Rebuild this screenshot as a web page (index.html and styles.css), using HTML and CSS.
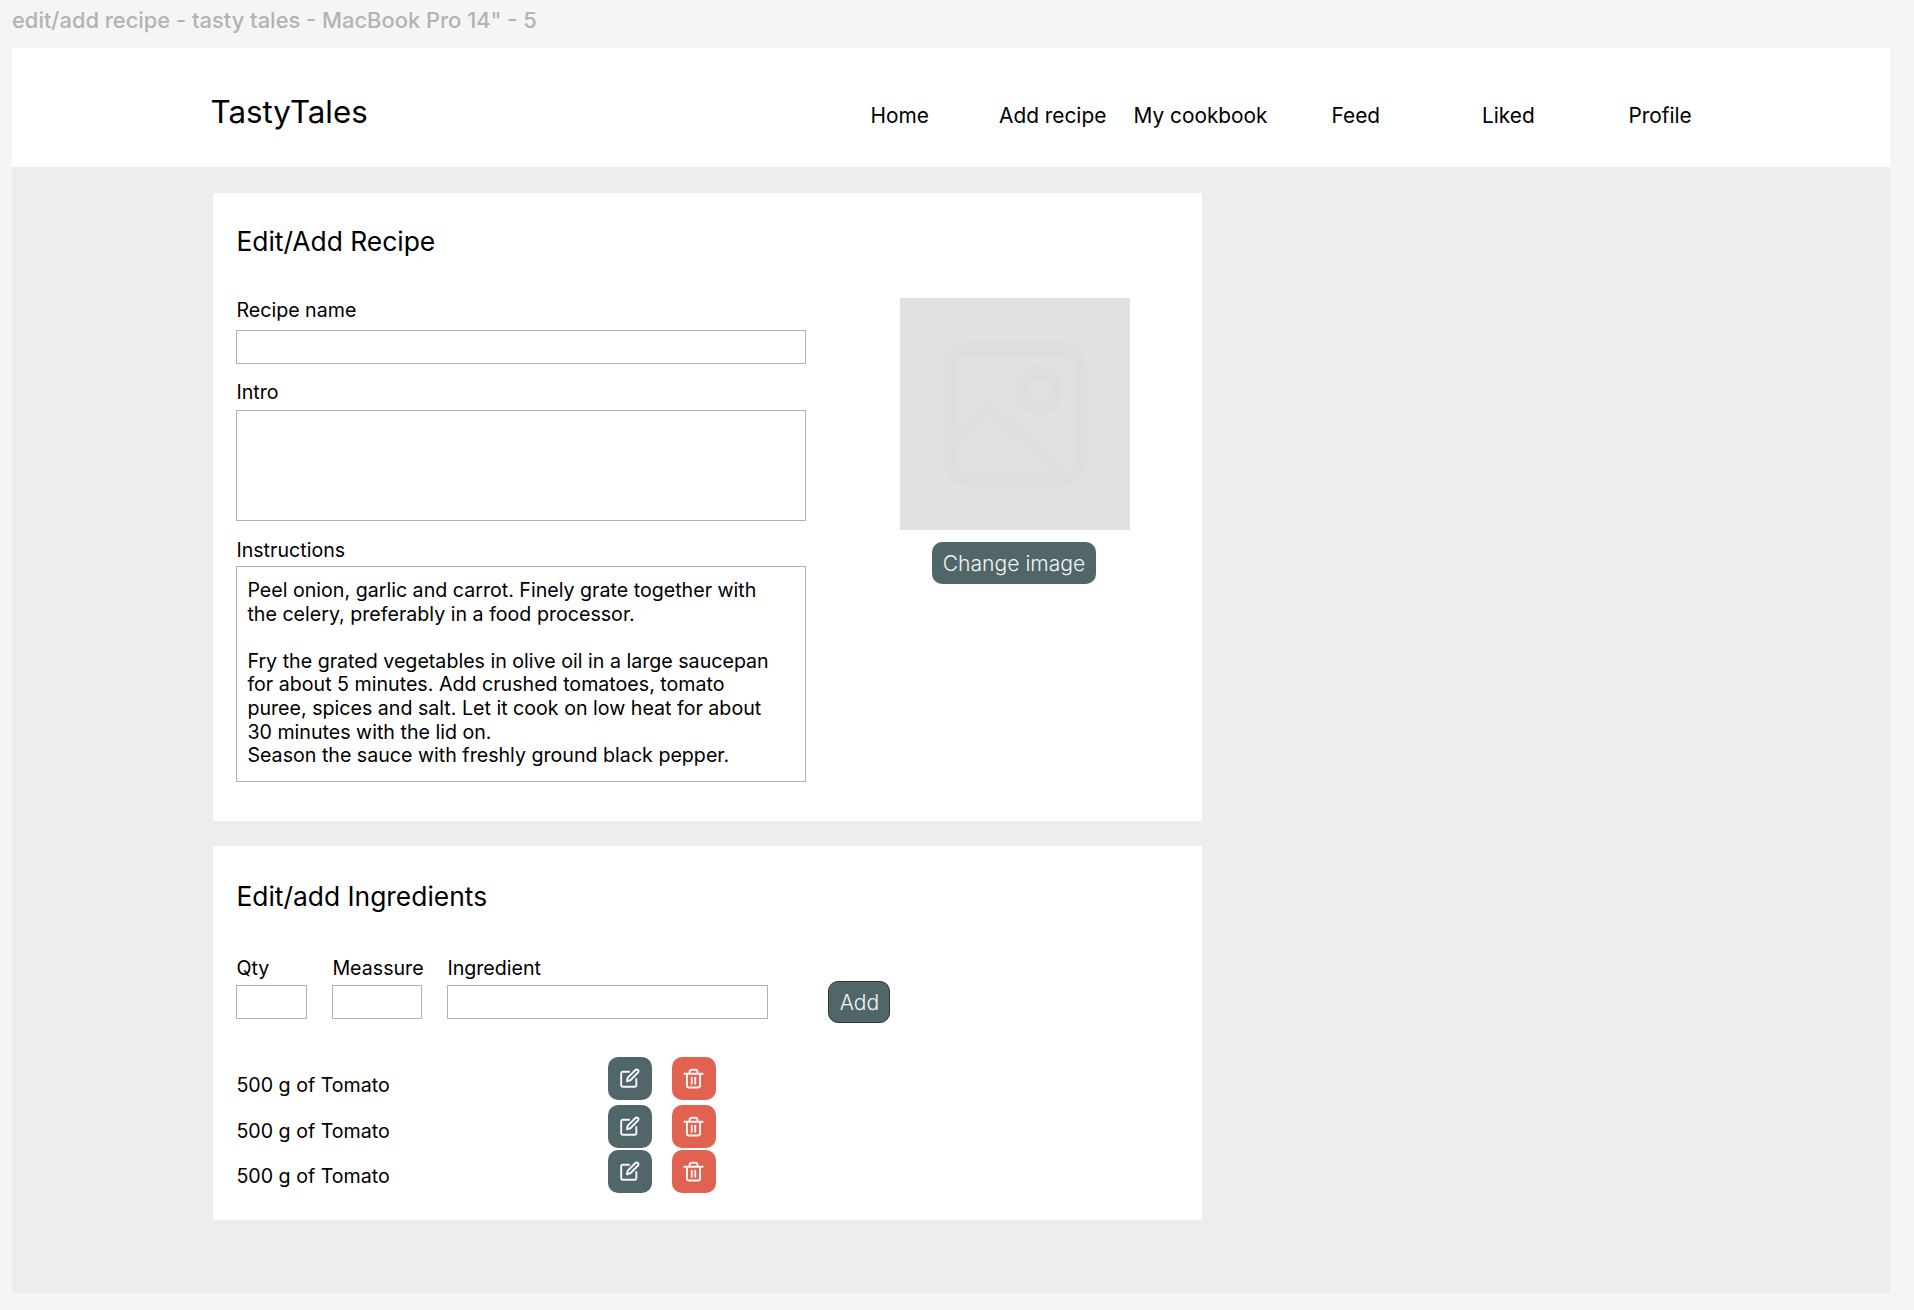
FILE: index.html
```html
<!DOCTYPE html>
<html lang="en">
<head>
<meta charset="utf-8">
<title>TastyTales</title>
<link rel="stylesheet" href="styles.css">
</head>
<body>
<svg class="sprite" width="0" height="0" aria-hidden="true">
  <symbol id="edit" viewBox="0 0 24 24"><path d="M11.500 4.200H4.200a1.700 1.700 0 0 0-1.700 1.700v13.900a1.700 1.700 0 0 0 1.700 1.700h13.900a1.700 1.700 0 0 0 1.700-1.700V12.500M18.800 2.300a2 2 0 0 1 2.900 2.900L13 14l-4 1.100L10 11z"/></symbol>
  <symbol id="trash" viewBox="0 0 24 24"><path d="M1.500 6.500h21M4.500 6.500v13.500a2.200 2.200 0 0 0 2.200 2.200h10.600a2.200 2.200 0 0 0 2.200-2.200V6.500M7.500 6.500V4.200a2.200 2.200 0 0 1 2.200-2.200h4.600a2.200 2.200 0 0 1 2.200 2.200v2.300M10 11v7M14 11v7"/></symbol>
</svg>
<p class="frame-title">edit/add recipe - tasty tales - MacBook Pro 14" - 5</p>
<div class="frame">
  <header class="header">
    <div class="logo">TastyTales</div>
    <nav class="nav">
      <a>Home</a><a>Add recipe</a><a>My cookbook</a><a>Feed</a><a>Liked</a><a>Profile</a>
    </nav>
  </header>
  <main class="main">
    <section class="card recipe">
      <h1 class="heading">Edit/Add Recipe</h1>
      <div class="recipe-body">
        <div class="fields">
          <label class="label" for="name">Recipe name</label>
          <input class="box name" id="name">
          <label class="label" for="intro">Intro</label>
          <textarea class="box intro" id="intro"></textarea>
          <label class="label" for="instructions">Instructions</label>
          <textarea class="box instructions" id="instructions">Peel onion, garlic and carrot. Finely grate together with
the celery, preferably in a food processor.

Fry the grated vegetables in olive oil in a large saucepan
for about 5 minutes. Add crushed tomatoes, tomato
puree, spices and salt. Let it cook on low heat for about
30 minutes with the lid on.
Season the sauce with freshly ground black pepper.</textarea>
        </div>
        <div class="image-column">
          <div class="placeholder">
            <svg class="placeholder-icon" viewBox="0 0 24 24"><rect x="3" y="3" width="18" height="18" rx="2.500"/><circle cx="15.250" cy="8.700" r="2.450"/><path d="M3 16.300l5.500-5.400L18.800 21"/></svg>
          </div>
          <button class="button change">Change image</button>
        </div>
      </div>
    </section>
    <section class="card ingredients">
      <h2 class="heading">Edit/add Ingredients</h2>
      <div class="ingredient-form">
        <div class="qty"><label class="label" for="qty">Qty</label><input class="box" id="qty"></div>
        <div class="measure"><label class="label" for="measure">Meassure</label><input class="box" id="measure"></div>
        <div class="ingredient"><label class="label" for="ingredient">Ingredient</label><input class="box" id="ingredient"></div>
        <button class="button add">Add</button>
      </div>
      <ul class="list">
        <li class="item"><span class="item-text">500 g of Tomato</span><button class="icon-button" aria-label="Edit"><svg class="icon"><use href="#edit"/></svg></button><button class="icon-button delete" aria-label="Delete"><svg class="icon"><use href="#trash"/></svg></button></li>
        <li class="item"><span class="item-text">500 g of Tomato</span><button class="icon-button" aria-label="Edit"><svg class="icon"><use href="#edit"/></svg></button><button class="icon-button delete" aria-label="Delete"><svg class="icon"><use href="#trash"/></svg></button></li>
        <li class="item"><span class="item-text">500 g of Tomato</span><button class="icon-button" aria-label="Edit"><svg class="icon"><use href="#edit"/></svg></button><button class="icon-button delete" aria-label="Delete"><svg class="icon"><use href="#trash"/></svg></button></li>
      </ul>
    </section>
  </main>
</div>
</body>
</html>
```
FILE: styles.css
```css
* { box-sizing: border-box; margin: 0; padding: 0; }
body {
  background: #f5f5f5;
  color: #000;
  font: 400 19.640px/24px Inter, sans-serif;
  height: 1310px;
  overflow: hidden;
}
.sprite { display: none; }
.frame-title {
  height: 48px;
  padding: 6px 0 0 12px;
  font-size: 21.900px;
  line-height: 28px;
  font-weight: 500;
  color: #b3b3b3;
}
.frame { width: 1878px; height: 1244.500px; margin-left: 12px; background: #eceeed; }
.header { display: flex; height: 119px; background: #fff; }
.logo { width: 858.500px; padding: 45px 0 0 198.500px; font-size: 31.300px; line-height: 38px; }
.nav {
  display: grid;
  grid-template-columns: 128.500px 134.500px 198px 150.500px 146.500px auto;
  padding-top: 54px;
  font-size: 20.850px;
  line-height: 28px;
}
.main { padding: 26px 0 0 201px; }
.card { width: 989px; background: #fff; padding-left: 23.400px; }
.recipe { height: 628px; padding-top: 32px; }
.ingredients { height: 374px; margin-top: 25px; padding-top: 34px; }
.heading { font-size: 26.400px; line-height: 32px; font-weight: 400; }
.recipe-body { display: flex; gap: 94px; }
.fields { width: 570px; padding-top: 41px; }
.label { display: block; height: 24px; }
.box {
  display: block;
  width: 100%;
  height: 34px;
  border: 1px solid #b2b2b2;
  border-radius: 0;
  background: #fff;
  font: inherit;
  resize: none;
  overflow: hidden;
}
.name { margin: 8px 0 16px; }
.intro { height: 111px; margin: 6px 0 17px; }
.instructions { height: 216px; margin-top: 4px; padding: 12px 10px; line-height: 23.600px; }
.image-column { width: 230px; padding-top: 41px; }
.placeholder { height: 232px; background: #e1e1e1; display: grid; place-items: center; }
.placeholder-icon { width: 174px; height: 174px; fill: none; stroke: #dedede; stroke-width: 1.900; }
.button {
  display: block;
  border: 0;
  border-radius: 10px;
  background: #506668;
  color: #f2f5f5;
  font: 300 21.100px/42px Inter, sans-serif;
  text-align: center;
}
.change { width: 164px; height: 42px; margin: 12px 0 0 31.600px; padding-top: 1px; }
.ingredient-form { display: flex; padding-top: 44px; }
.ingredient-form .box { margin-top: 5px; }
.qty { width: 71px; margin-right: 25px; }
.measure { width: 90px; margin-right: 25px; }
.ingredient { width: 321px; margin-right: 60px; }
.add { width: 62px; height: 42px; margin-top: 25px; padding-top: 1px; border: 1.200px solid #303636; line-height: 40px; }
.list { list-style: none; padding-top: 34px; }
.item { display: flex; height: 48px; }
.item:nth-child(2) { height: 45px; }
.item-text { width: 371.600px; padding-top: 16px; }
.item:nth-child(n+2) .item-text { padding-top: 14px; }
.icon-button {
  display: grid;
  place-items: center;
  width: 44px;
  height: 42.500px;
  margin-right: 20px;
  border: 0;
  border-radius: 10px;
  background: #506668;
}
.delete { background: #e16251; }
.icon { width: 21px; height: 21px; margin-right: 1px; fill: none; stroke: #f5f6f6; stroke-width: 2.200; stroke-linecap: round; stroke-linejoin: round; }
```
